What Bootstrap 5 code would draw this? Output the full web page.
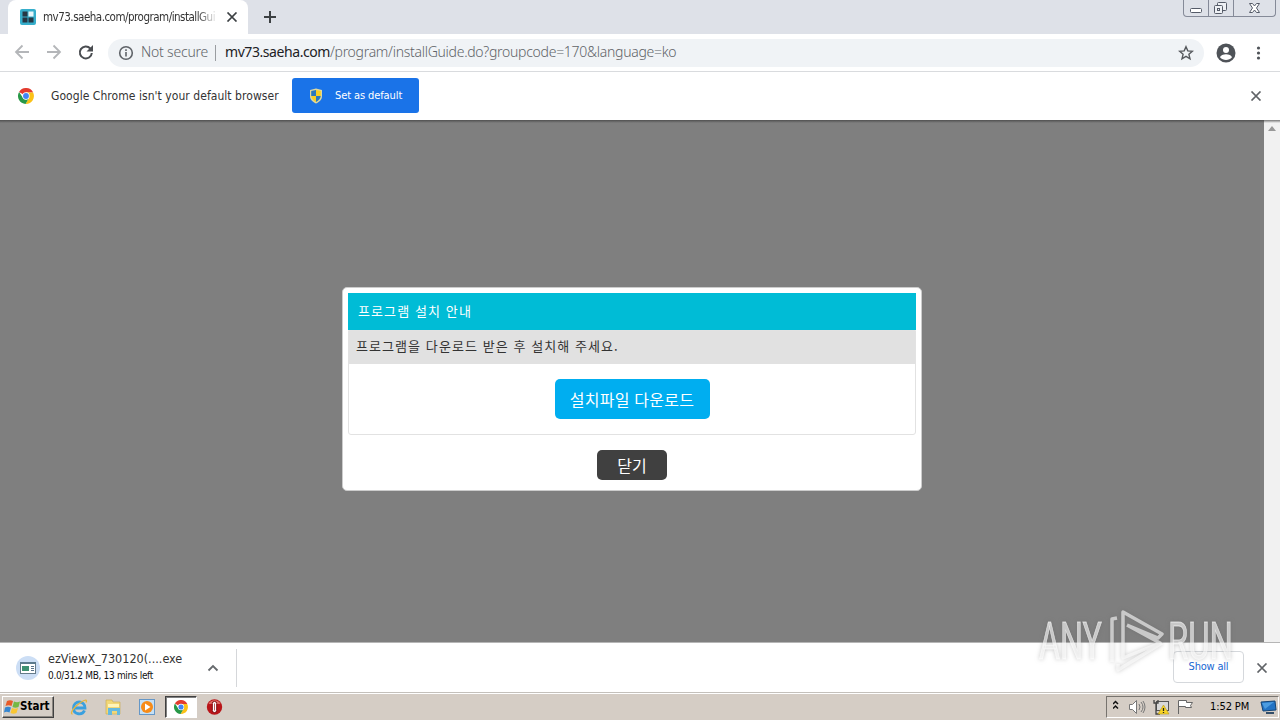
<!DOCTYPE html>
<html lang="ko">
<head>
    <meta charset="UTF-8">
    <meta name="viewport" content="width=device-width, initial-scale=1.0">
    <title>프로그램 설치 안내</title>
    <link rel="stylesheet" href="https://cdn.jsdelivr.net/npm/bootstrap@5.3.0/dist/css/bootstrap.min.css">
    <style>
        body { height: 720px; font-family: "DejaVu Sans Condensed", "Noto Sans", "Noto Sans CJK KR", sans-serif; font-size: 12px; line-height: 1.2; color: #333; }
        svg { display: block; flex-shrink: 0; }
        .lite { font-family: "Noto Sans", sans-serif; font-weight: 300; }

        /* Tab strip */
        .tabstrip { height: 34px; background: #dee1e8; padding-left: 8px; }
        .tab-active { width: 240px; height: 34px; background: #fff; border-radius: 8px 8px 0 0; padding-left: 12px; }
        .tab-title { width: 175px; margin-left: 7px; font-size: 11.5px; line-height: 16px; letter-spacing: -.5px; -webkit-mask-image: linear-gradient(90deg, #000 88%, transparent); mask-image: linear-gradient(90deg, #000 88%, transparent); }
        .win-buttons { margin-right: 4px; height: 17px; border: 1px solid #858a98; border-top: 0; border-radius: 0 0 4px 4px; }
        .win-buttons div { height: 16px; border-right: 1px solid #858a98; }
        .win-buttons div:last-child { border: 0; }

        /* Toolbar */
        .toolbar { height: 38px; border-bottom: 1px solid #d9dbde; }
        .omnibox { width: 1096px; height: 28px; border-radius: 14px; background: #f0f3f6; margin-left: 12px; padding: 0 10px; font-size: 14px; color: #5f6368; }
        .insecure { width: 67px; margin-left: 7px; letter-spacing: -.2px; white-space: nowrap; }
        .url { letter-spacing: -.28px; }
        .url b { color: #202124; font-weight: 400; letter-spacing: -.43px; }
        .url-split { width: 1px; height: 16px; background: #9a9da1; margin: 0 9px 0 7px; }

        .infobar { height: 48px; padding-left: 18px; }
        .prompt-text { width: 228px; margin: 0 13px 0 17px; letter-spacing: .05px; }
        .btn-default-browser { --bs-btn-bg: #1a73e8; --bs-btn-color: #fff; --bs-btn-hover-bg: #1765cc; --bs-btn-hover-color: #fff; width: 127px; height: 35px; border: 0; border-radius: 3px; padding: 0 0 0 16px; margin-bottom: 1px; font-size: 11px; }
        .set-text { margin-left: 11px; padding-top: 1px; letter-spacing: -.1px; }

        /* Page */
        .page { height: 522px; background: #7f7f7f linear-gradient(#505050, #7f7f7f) 0 0 / 100% 3px no-repeat; }
        .scroll-gutter { width: 16px; background: #f1f1f1 linear-gradient(#777, #f1f1f1) 0 0 / 100% 3px no-repeat; padding: 6px 4px; }
        .guide { width: 580px; height: 204px; margin-top: 15px; background: #fff; border: 1px solid #ccc; border-radius: 5px; padding: 5px; font-family: "Noto Sans CJK KR", sans-serif; }
        .guide-title { height: 37px; background: #00bcd6; color: #fff; padding-left: 10px; font-size: 13px; letter-spacing: 1.1px; }
        .guide-box { height: 105px; border: 1px solid #e2e2e2; border-radius: 0 0 3px 3px; }
        .guide-note { height: 33px; background: #e1e1e1; padding: 0 0 2px 7px; font-size: 13px; letter-spacing: 1.07px; color: #333; }
        .file-row { padding-top: 15px; }
        .btn-file { --bs-btn-bg: #00aef0; --bs-btn-color: #fff; --bs-btn-hover-bg: #009ad6; --bs-btn-hover-color: #fff; width: 155px; height: 40px; border: 0; border-radius: 5px; font-size: 16px; letter-spacing: .25px; padding: 0; }
        .btn-shut { --bs-btn-bg: #404040; --bs-btn-color: #fff; --bs-btn-hover-bg: #222; --bs-btn-hover-color: #fff; width: 70px; height: 30px; border: 0; border-radius: 5px; font-size: 16px; padding: 0; margin-top: 15px; }

        /* Downloads */
        .downloads { height: 50px; border-top: 1px solid #b6b6b6; padding-left: 16px; }
        .dl-item { width: 221px; height: 38px; border-right: 1px solid #d5d7da; }
        .dl-name { font-size: 12.5px; line-height: 17px; white-space: nowrap; margin-top: -2px; }
        .dl-status { font-size: 10px; line-height: 17px; letter-spacing: -.33px; color: #111; white-space: nowrap; }
        .btn-all { --bs-btn-color: #1967d2; --bs-btn-border-color: #d5d8dc; width: 71px; height: 32px; padding: 0; font-size: 11px; letter-spacing: -.2px; border-radius: 4px; margin-bottom: 1px; }

        /* Taskbar */
        .taskbar { height: 28px; background: #d5cdc5; border-top: 1px solid #c4c0bb; box-shadow: inset 0 1px #fff; padding-left: 2px; }
        .start-btn { width: 52px; height: 22px; border: 1px solid; border-color: #fff #404040 #404040 #fff; box-shadow: inset -1px -1px #8b8680; padding-left: 1px; font-size: 11.5px; font-weight: 700; color: #000; }
        .task-on { width: 32px; height: 22px; background: #fff; border: 1px solid; border-color: #404040 #fff #fff #404040; box-shadow: inset 1px 1px #808080; margin-left: 1px; }
        .tray { width: 173px; height: 22px; margin-right: 1px; border: 1px solid; border-color: #77736e #fff #fff #77736e; padding-left: 6px; font-size: 11px; color: #000; }
        .tray-time { margin-left: 11px; padding-top: 1px; letter-spacing: -.1px; }

        .watermark { left: 1030px; top: 600px; pointer-events: none; filter: drop-shadow(0 0 2px rgba(90, 90, 90, .5)); }
    </style>
</head>
<body class="overflow-hidden position-relative">

    <svg width="0" height="0" class="position-absolute">
        <symbol id="chrome" viewBox="0 0 18 18">
            <path fill="#e33b2e" d="M9 9 1.2 4.5A9 9 0 0 1 16.8 4.5L17 5H9Z"/>
            <path fill="#fbc116" d="M9 5h8A9 9 0 0 1 9 18l-.5-.1L12.5 11Z"/>
            <path fill="#279847" d="M1.2 4.5 5.5 11 9 13l3.3-1.8L8.5 18A9 9 0 0 1 1.2 4.5Z"/>
            <circle cx="9" cy="9" r="4.100" fill="#fff"/><circle cx="9" cy="9" r="3.300" fill="#4285f4"/>
        </symbol>
        <symbol id="cross" viewBox="0 0 10 10"><path d="m.5.5 9 9M9.500.5.5 9.500" stroke="currentColor" stroke-width="1.700"/></symbol>
    </svg>

    <!-- Tabs -->
    <div class="tabstrip d-flex">
        <div class="tab-active d-flex align-items-center">
            <svg width="16" height="16"><rect width="16" height="16" rx="2" fill="#36aecb"/><path fill="#263744" d="M2.500 2.500h5v5h-5zM2.500 8.500h5v5h-5zM8.500 8.500h5v5h-5z"/><path fill="#e8f6fa" d="M8.500 2.500h5v5h-5z"/></svg>
            <div class="tab-title text-nowrap overflow-hidden">mv73.saeha.com/program/installGui</div>
            <svg class="ms-2" width="12" height="10" color="#3c4043"><use href="#cross"/></svg>
        </div>
        <svg class="align-self-center ms-3" width="12" height="12"><path d="M6 0v12M0 6h12" stroke="#3c4043" stroke-width="2"/></svg>
        <div class="win-buttons d-flex ms-auto">
            <div><svg width="24" height="16"><rect x="6.500" y="8.500" width="11" height="4" rx="1" fill="#fff" stroke="#555b68"/></svg></div>
            <div><svg width="24" height="16" fill="#eef0f4" stroke="#555b68"><rect x="8.500" y="2.500" width="9" height="8" rx="1"/><rect x="5.500" y="5.500" width="8" height="8" rx="1"/><rect x="8.500" y="8.500" width="2" height="2"/></svg></div>
            <div><svg width="41" height="16"><path d="M15.500 3.500h3l2 2.500 2-2.500h3L22.500 8l3 4.500h-3l-2-2.500-2 2.500h-3l3-4.500Z" fill="#fff" stroke="#555b68"/></svg></div>
        </div>
    </div>

    <!-- Toolbar -->
    <div class="toolbar d-flex align-items-center">
        <svg width="96" height="37" fill="none" stroke-width="1.800">
            <path stroke="#b4b6b9" d="M29 18H16m6.500-6.500L16 18l6.500 6.500M47 18h13m-6.500-6.500L60 18l-6.500 6.500"/>
            <path stroke="#4a4d51" stroke-width="2" d="M90.300 14.500a6 6 0 1 0 1.500 4.500"/><path fill="#4a4d51" d="M93 11v6.500h-6.500z"/>
        </svg>
        <div class="omnibox d-flex align-items-center lite">
            <svg width="16" height="16" fill="none" stroke="#5f6368" stroke-width="1.600"><circle cx="8" cy="8" r="6.300"/><path d="M8 7v4.500M8 4.300v1.600"/></svg>
            <span class="insecure">Not secure</span>
            <span class="url-split"></span>
            <span class="url"><b>mv73.saeha.com</b>/program/installGuide.do?groupcode=170&amp;language=ko</span>
            <svg class="ms-auto" width="16" height="16"><path d="m8 1.700 1.800 4.200 4.600.4-3.500 3 1.100 4.500L8 11.400l-4 2.400 1.100-4.500-3.500-3 4.600-.4Z" fill="none" stroke="#55585c" stroke-width="1.400"/></svg>
        </div>
        <svg class="ms-auto" width="20" height="20"><circle cx="10" cy="10" r="9.500" fill="#4f5358"/><circle cx="10" cy="7" r="3" fill="#fff"/><path d="M4 14.300c1-4 11-4 12 0-3 3.500-9 3.500-12 0Z" fill="#fff"/></svg>
        <svg class="mx-3" width="12" height="16" fill="#4f5358"><circle cx="6.500" cy="3" r="1.600"/><circle cx="6.500" cy="8" r="1.600"/><circle cx="6.500" cy="13" r="1.600"/></svg>
    </div>

    <!-- Default browser prompt -->
    <div class="infobar d-flex align-items-center">
        <svg width="16" height="16"><use href="#chrome"/></svg>
        <span class="prompt-text text-nowrap">Google Chrome isn't your default browser</span>
        <button class="btn btn-default-browser d-flex align-items-center">
            <svg width="16" height="16"><path d="M8 .5 14 2v6c0 4-3 6-6 7.500C5 14 2 12 2 8V2Z" fill="#ddd8a0"/><path fill="#2b79bd" d="M8 2v6H3.200V3ZM8 8h4.800C12.500 11 10 13 8 14Z"/><path fill="#f8cf24" d="M8 2v6h4.800V3ZM8 8H3.200c.3 3 2.800 5 4.800 6Z"/></svg>
            <span class="set-text">Set as default</span>
        </button>
        <svg class="ms-auto me-3" width="16" height="10" color="#606367"><use href="#cross"/></svg>
    </div>

    <!-- Page with the install dialog -->
    <main class="page d-flex">
        <div class="flex-grow-1 d-flex align-items-center justify-content-center">
            <div class="guide">
                <div class="guide-title d-flex align-items-center">프로그램 설치 안내</div>
                <div class="guide-box">
                    <div class="guide-note d-flex align-items-center">프로그램을 다운로드 받은 후 설치해 주세요.</div>
                    <div class="file-row text-center"><button class="btn btn-file">설치파일 다운로드</button></div>
                </div>
                <div class="text-center"><button class="btn btn-shut">닫기</button></div>
            </div>
        </div>
        <div class="scroll-gutter"><svg width="8" height="5"><path d="m0 5 4-5 4 5Z" fill="#989898"/></svg></div>
    </main>

    <!-- Downloads -->
    <div class="downloads d-flex align-items-center">
        <div class="dl-item d-flex align-items-center">
            <svg width="24" height="24"><circle cx="12" cy="12" r="12" fill="#ccdef5"/><rect x="4.500" y="6.500" width="15" height="11" fill="#fff" stroke="#657b89"/><path d="M4 6h16v2H4z" fill="#5c7a8c"/><path d="M6 10h7v5H6z" fill="#3c9070"/><path d="M15 10.500h3m-3 2h3m-3 2h3" stroke="#58728a"/></svg>
            <div class="ms-2">
                <div class="dl-name">ezViewX_730120(....exe</div>
                <div class="dl-status">0.0/31.2 MB, 13 mins left</div>
            </div>
            <svg class="ms-auto me-3" width="14" height="10"><path d="m2.500 7.500 4.500-4.500 4.500 4.500" fill="none" stroke="#66696d" stroke-width="1.800"/></svg>
        </div>
        <button class="btn btn-all ms-auto">Show all</button>
        <svg class="ms-2 me-2" width="20" height="10" color="#606367"><use href="#cross"/></svg>
    </div>

    <!-- Taskbar -->
    <div class="taskbar d-flex align-items-center">
        <div class="start-btn d-flex align-items-center">
            <svg width="16" height="16"><path fill="#e85a27" d="M3 2c2-1 4-1 6 0L7.500 7c-2-1-4-1-6 0Z"/><path fill="#75b843" d="M10 2.500c2 1 4 1 6 0L14.500 8c-2 1-4 1-6 0Z"/><path fill="#3686d0" d="M1 8.500c2-1 4-1 6 0L5.500 13.500c-2-1-4-1-5.500 0Z"/><path fill="#fac632" d="M8 9c2 1 4 1 6 0l-1.500 5c-2 1-4 1-6 0Z"/></svg>
            <span>Start</span>
        </div>
        <svg width="110" height="20">
            <!-- Internet Explorer -->
            <path d="M20.500 11H31c0-8-11.500-8-11.500 0 0 7 9 7.500 11 2.500" fill="none" stroke="#3aa0df" stroke-width="2.800"/>
            <path d="M18.500 17c-3 0 1-7 8-11.500 5-3.500 7-3 5.500 0" fill="none" stroke="#e6b63e" stroke-width="1.300"/>
            <!-- Explorer -->
            <path d="M52 3h6l1 2h7v12H52Z" fill="#f1d778" stroke="#caa74a" stroke-width=".6"/><path d="M54 7h11v3H54Z" fill="#fff4b9"/><path d="M54 18v-7h12v7h-3v-4h-5v4Z" fill="#65b9df"/>
            <!-- Media Player -->
            <rect x="85.500" y="2.500" width="15" height="15" fill="#c5e0f5" stroke="#6597c7"/><circle cx="93" cy="10" r="6" fill="#f78b18"/><path d="m91 6.500 5.500 3.500-5.500 3.500Z" fill="#fff"/>
        </svg>
        <div class="task-on d-flex align-items-center justify-content-center"><svg width="14" height="14"><use href="#chrome"/></svg></div>
        <svg class="ms-2" width="18" height="16"><circle cx="9.500" cy="8" r="7.700" fill="#b91519"/><path d="M3.500 5c2-5 10-5 12 0Z" fill="#dd6b63"/><rect x="7.300" y="2.500" width="4.400" height="11" rx="2" fill="#fff" stroke="#7f0c10"/><path d="M9.500 4.500v7" stroke="#a33" stroke-width=".8"/></svg>
        <div class="tray d-flex align-items-center ms-auto">
            <svg width="86" height="20" fill="none">
                <path d="m0 7 2.500-2.500L5 7M0 11.500 2.500 9 5 11.500" stroke="#111" stroke-width="1.500"/>
                <path d="M16.500 7.500h3l4-4v13l-4-4h-3Z" fill="#fff" stroke="#777"/><path d="M26 7q2 3 0 6m2-8q4 5 0 10m2-11q4 6 0 12" stroke="#777"/>
                <rect x="43.500" y="4.500" width="12" height="9" fill="#d8d8d8" stroke="#555"/><path d="M41 3v3h4V3m-2 3v11h4" stroke="#444" stroke-width="1.300"/><path d="m50.500 8 5.500 9H45Z" fill="#f8d426" stroke="#b69817" stroke-width=".6"/><path d="M50.500 11v3m0 1v1" stroke="#222" stroke-width="1.300"/>
                <path d="M65.500 17V3.500h8v2h6l-2 3 1 2h-6v-1h-7" fill="#fff" stroke="#666"/>
            </svg>
            <span class="tray-time text-nowrap">1:52 PM</span>
            <svg class="ms-auto" width="18" height="16"><path d="m1 3 14-1 1 9-13 1Z" fill="#2373c4" stroke="#154576"/><path d="m2 4 12-1-9 7Z" fill="#4c9ce0"/><path d="M6 14h8" stroke="#334e69" stroke-width="2"/></svg>
        </div>
    </div>

    <svg class="watermark position-absolute" width="210" height="80" fill="none" stroke="#fff" stroke-opacity=".6">
        <g fill="#fff" fill-opacity=".6" stroke-width=".8" font-family="Roboto, sans-serif" font-size="51">
            <text x="9" y="59" textLength="63" lengthAdjust="spacingAndGlyphs">ANY</text>
            <text x="138" y="59" textLength="65" lengthAdjust="spacingAndGlyphs">RUN</text>
        </g>
        <path stroke-width="3.500" stroke-linejoin="round" d="M87 18l-5 1v43M97 25l31 13 4-4-39-22v46l37-15-33-18M88 64v6l44-27"/>
    </svg>

    <script src="https://cdn.jsdelivr.net/npm/bootstrap@5.3.0/dist/js/bootstrap.bundle.min.js"></script>
</body>
</html>
